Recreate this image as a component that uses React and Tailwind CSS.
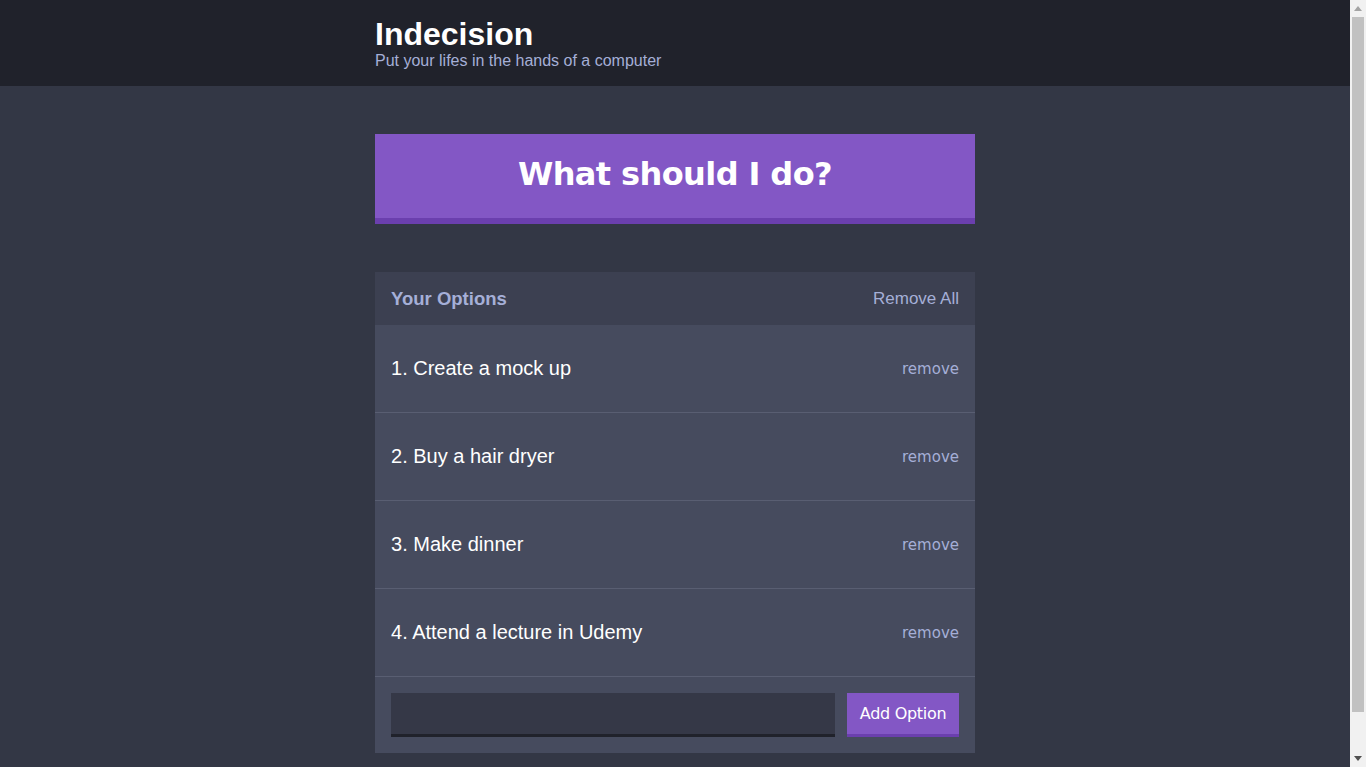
export default function App() {
  const options = ["Create a mock up", "Buy a hair dryer", "Make dinner", "Attend a lecture in Udemy"];
  return (
    <div className="min-h-[809px] bg-[#333745] font-['Liberation_Sans',Arial,sans-serif] pr-[16px]">
      <header className="bg-[#20222b] h-[86px]">
        <div className="w-[600px] mx-auto pt-[16px]">
          <h1 className="text-[32px] font-bold text-white leading-[36px]">Indecision</h1>
          <h2 className="text-[16px] text-[#a5afd7] leading-[18px] mt-[0px]">Put your lifes in the hands of a computer</h2>
        </div>
      </header>
      <div className="w-[600px] mx-auto pt-[48px] pb-[56px]">
        <button className="w-full h-[90px] pb-[4px] bg-[#8357c5] border-b-[6px] border-[#6b3fae] text-white font-bold text-[32px] font-['DejaVu_Sans',Verdana,sans-serif] tracking-[-0.6px]">
          What should I do?
        </button>
        <div className="mt-[48px] bg-[#464b5e]">
          <div className="h-[53px] bg-[#3c4051] flex items-center justify-between px-[16px]">
            <h3 className="text-[18.5px] font-bold text-[#a5afd7]">Your Options</h3>
            <button className="text-[17px] text-[#a5afd7]">Remove All</button>
          </div>
          {options.map((o, i) => (
            <div key={i} className="h-[88px] flex items-center justify-between px-[16px] border-b border-[#595e72]">
              <p className="text-[20px] text-white mt-[-2px]">{i + 1}. {o}</p>
              <button className="text-[#a5afd7] font-['DejaVu_Sans',Verdana,sans-serif] text-[15px] mt-[2px]">remove</button>
            </div>
          ))}
          <form className="flex px-[16px] pt-[16px] pb-[16px] gap-[12px]">
            <input className="flex-1 h-[44px] bg-[#353847] border-b-[3px] border-[#20222b] outline-none text-white px-2" />
            <button type="button" className="w-[112px] h-[44px] bg-[#8357c5] border-b-[3px] border-[#6b3fae] text-white text-[16px] font-['DejaVu_Sans',Verdana,sans-serif] tracking-[-0.3px]">Add Option</button>
          </form>
        </div>
      </div>
      <div className="fixed top-0 right-0 w-[16px] h-screen bg-[#f1f1f1] flex flex-col items-center">
        <div className="h-[17px] w-full flex items-center justify-center">
          <svg width="8" height="5" viewBox="0 0 8 5"><path d="M4 0 L8 5 L0 5 Z" fill="#a3a3a3" /></svg>
        </div>
        <div className="w-[12px] h-[695px] bg-[#c1c1c1]" />
        <div className="flex-1" />
        <div className="h-[17px] w-full flex items-center justify-center">
          <svg width="8" height="5" viewBox="0 0 8 5"><path d="M0 0 L8 0 L4 5 Z" fill="#505050" /></svg>
        </div>
      </div>
    </div>
  );
}
